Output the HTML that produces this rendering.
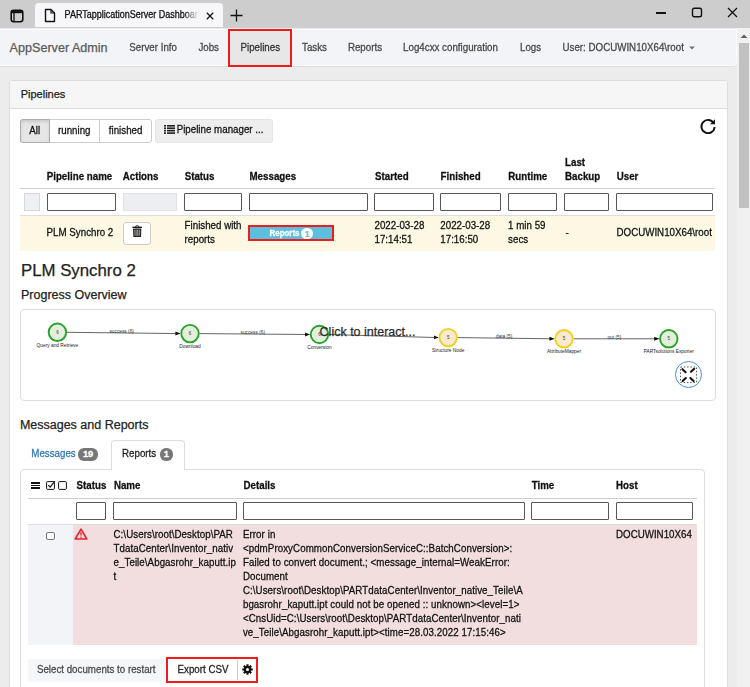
<!DOCTYPE html>
<html><head><meta charset="utf-8"><title>PARTapplicationServer Dashboard</title>
<style>
html,body{margin:0;padding:0;width:750px;height:687px;overflow:hidden;background:#ececec;}
body{position:relative;font-family:"Liberation Sans",sans-serif;}
.t{position:absolute;white-space:nowrap;line-height:1;font-family:"Liberation Sans",sans-serif;-webkit-text-stroke:0.25px currentColor;}
.r{position:absolute;}
.badge{display:flex;padding-top:1px;box-sizing:border-box;align-items:center;justify-content:center;color:#fff;font-weight:700;font-family:"Liberation Sans",sans-serif;line-height:1;}
</style></head><body>
<div class="r" style="left:0px;top:0px;width:750px;height:28px;background:#cdcdcd;"></div>
<div class="r" style="left:0px;top:27.5px;width:750px;height:1.0px;background:#bcbcbc;"></div>
<div class="r" style="left:34.5px;top:2.6px;width:188.5px;height:24.9px;background:#f7f7f9;border-radius:4px 4px 0 0;"></div>
<svg class="r" style="left:10px;top:9px" width="14" height="14" viewBox="0 0 14 14"><rect x="1.2" y="1.2" width="11.6" height="11.6" rx="2.5" fill="none" stroke="#111" stroke-width="1.6"/><rect x="1.2" y="1.2" width="11.6" height="3" fill="#111"/><line x1="4" y1="4" x2="4" y2="12" stroke="#111" stroke-width="1.3"/></svg>
<svg class="r" style="left:44px;top:8px" width="12" height="15" viewBox="0 0 12 15"><path d="M1.5 1.5 H7 L10.5 5 V13.5 H1.5 Z" fill="none" stroke="#111" stroke-width="1.4" stroke-linejoin="round"/><path d="M7 1.5 V5 H10.5" fill="none" stroke="#111" stroke-width="1.2"/></svg>
<div class="t" style="left:64.60px;top:10.68px;font-size:9px;font-weight:400;color:#111;transform:scaleY(1.12);transform-origin:0 7.62px;width:135px;overflow:hidden;white-space:nowrap;-webkit-mask-image:linear-gradient(90deg,#000 88%,transparent 99%);">PARTapplicationServer Dashboard</div>
<svg class="r" style="left:205.5px;top:12.3px" width="8" height="8" viewBox="0 0 8 8"><path d="M0.8 0.8 L7.2 7.2 M7.2 0.8 L0.8 7.2" stroke="#111" stroke-width="1.25"/></svg>
<svg class="r" style="left:230px;top:9px" width="13" height="13" viewBox="0 0 13 13"><path d="M6.5 0.5 V12.5 M0.5 6.5 H12.5" stroke="#111" stroke-width="1.3"/></svg>
<div class="r" style="left:656px;top:12px;width:10px;height:1.5px;background:#111;"></div>
<svg class="r" style="left:691px;top:7px" width="12" height="11" viewBox="0 0 12 11"><rect x="1.5" y="1.2" width="9" height="8.6" rx="1.8" fill="none" stroke="#111" stroke-width="1.4"/></svg>
<svg class="r" style="left:727px;top:7px" width="11" height="11" viewBox="0 0 11 11"><path d="M1 1 L10 10 M10 1 L1 10" stroke="#111" stroke-width="1.3"/></svg>
<div class="r" style="left:0px;top:28px;width:737.3px;height:659px;background:#ececec;"></div>
<div class="r" style="left:737.3px;top:28px;width:12.700000000000045px;height:659px;background:#f1f1f1;"></div>
<div class="r" style="left:739px;top:43px;width:10px;height:165px;background:#c1c1c1;"></div>
<svg class="r" style="left:740px;top:33px" width="8" height="6" viewBox="0 0 8 6"><path d="M0.5 5 L4 1.5 L7.5 5 Z" fill="#606060"/></svg>
<div class="r" style="left:-5px;top:28.5px;width:742px;height:38.5px;background:#dedede;border-radius:0 0 4px 0;"></div>
<div class="r" style="left:-5px;top:28.5px;width:741.5px;height:37.0px;background:#fdfdfe;border-radius:0 0 4px 0;"></div>
<div class="r" style="left:-5px;top:29.5px;width:740.7px;height:35.0px;background:#f3f4f7;border-radius:0 0 3px 0;"></div>
<div class="r" style="left:228px;top:29px;width:64px;height:37px;background:#e7e7e7;"></div>
<div class="t" style="left:9.60px;top:41.73px;font-size:12.6px;font-weight:400;color:#5a5a5a;">AppServer Admin</div>
<div class="t" style="left:129.30px;top:43.44px;font-size:9.75px;font-weight:400;color:#484848;transform:scaleY(1.12);transform-origin:0 8.26px;">Server Info</div>
<div class="t" style="left:198.40px;top:43.44px;font-size:9.75px;font-weight:400;color:#484848;transform:scaleY(1.12);transform-origin:0 8.26px;">Jobs</div>
<div class="t" style="left:240.50px;top:43.44px;font-size:9.75px;font-weight:400;color:#333;transform:scaleY(1.12);transform-origin:0 8.26px;">Pipelines</div>
<div class="t" style="left:302.00px;top:43.44px;font-size:9.75px;font-weight:400;color:#484848;transform:scaleY(1.12);transform-origin:0 8.26px;">Tasks</div>
<div class="t" style="left:347.90px;top:43.44px;font-size:9.75px;font-weight:400;color:#484848;transform:scaleY(1.12);transform-origin:0 8.26px;">Reports</div>
<div class="t" style="left:403.10px;top:43.44px;font-size:9.75px;font-weight:400;color:#484848;transform:scaleY(1.12);transform-origin:0 8.26px;">Log4cxx configuration</div>
<div class="t" style="left:520.00px;top:43.44px;font-size:9.75px;font-weight:400;color:#484848;transform:scaleY(1.12);transform-origin:0 8.26px;">Logs</div>
<div class="t" style="left:562.50px;top:43.44px;font-size:9.75px;font-weight:400;color:#484848;transform:scaleY(1.12);transform-origin:0 8.26px;">User: DOCUWIN10X64\root</div>
<svg class="r" style="left:689px;top:46px" width="6" height="4" viewBox="0 0 6 4"><path d="M0 0.5 H6 L3 3.5 Z" fill="#777"/></svg>
<div class="r" style="left:228px;top:29px;width:64px;height:38px;border:2px solid #ee1c1c;box-sizing:border-box;"></div>
<div class="r" style="left:9px;top:80px;width:719px;height:620px;background:#fff;border:1px solid #dddddd;border-radius:3px;box-sizing:border-box;"></div>
<div class="r" style="left:10px;top:81px;width:717px;height:27px;background:#f6f6f7;border-bottom:1px solid #dddddd;"></div>
<div class="t" style="left:20.70px;top:88.79px;font-size:11px;font-weight:400;color:#222;">Pipelines</div>
<div class="r" style="left:20px;top:119px;width:132px;height:24px;background:#fff;border:1px solid #cccccc;border-radius:3px;box-sizing:border-box;"></div>
<div class="r" style="left:20px;top:119px;width:30px;height:24px;background:#e6e6e6;border:1px solid #adadad;border-radius:3px 0 0 3px;box-sizing:border-box;box-shadow:inset 0 2px 3px rgba(0,0,0,.12);"></div>
<div class="r" style="left:99px;top:119px;width:1px;height:24px;background:#cccccc;"></div>
<div class="t" style="left:29.30px;top:125.84px;font-size:9.75px;font-weight:400;color:#111;transform:scaleY(1.12);transform-origin:0 8.26px;">All</div>
<div class="t" style="left:58.00px;top:125.84px;font-size:9.75px;font-weight:400;color:#111;transform:scaleY(1.12);transform-origin:0 8.26px;">running</div>
<div class="t" style="left:108.80px;top:125.84px;font-size:9.75px;font-weight:400;color:#111;transform:scaleY(1.12);transform-origin:0 8.26px;">finished</div>
<div class="r" style="left:155px;top:119px;width:118px;height:24px;background:#eeeeee;border:1px solid #e4e4e4;border-radius:3px;box-sizing:border-box;"></div>
<svg class="r" style="left:163.5px;top:125.2px" width="11" height="9" viewBox="0 0 11 10" preserveAspectRatio="none"><g fill="#222"><rect x="0" y="0" width="2" height="1.8"/><rect x="0" y="2.7" width="2" height="1.8"/><rect x="0" y="5.4" width="2" height="1.8"/><rect x="0" y="8.1" width="2" height="1.8"/><rect x="3" y="0" width="8" height="1.8"/><rect x="3" y="2.7" width="8" height="1.8"/><rect x="3" y="5.4" width="8" height="1.8"/><rect x="3" y="8.1" width="8" height="1.8"/></g></svg>
<div class="t" style="left:176.70px;top:125.44px;font-size:9.75px;font-weight:400;color:#111;transform:scaleY(1.12);transform-origin:0 8.26px;">Pipeline manager ...</div>
<svg class="r" style="left:699px;top:117px" width="18" height="18" viewBox="0 0 18 18"><path d="M14.6 6.0 A6.6 6.6 0 1 0 15.6 10" fill="none" stroke="#111" stroke-width="1.9"/><path d="M16 2.2 L16 7.2 L11 7.2 Z" fill="#111"/></svg>
<div class="t" style="left:46.70px;top:172.34px;font-size:9.75px;font-weight:700;color:#111;transform:scaleY(1.12);transform-origin:0 8.26px;">Pipeline name</div>
<div class="t" style="left:122.70px;top:172.34px;font-size:9.75px;font-weight:700;color:#111;transform:scaleY(1.12);transform-origin:0 8.26px;">Actions</div>
<div class="t" style="left:184.70px;top:172.34px;font-size:9.75px;font-weight:700;color:#111;transform:scaleY(1.12);transform-origin:0 8.26px;">Status</div>
<div class="t" style="left:249.50px;top:172.34px;font-size:9.75px;font-weight:700;color:#111;transform:scaleY(1.12);transform-origin:0 8.26px;">Messages</div>
<div class="t" style="left:375.00px;top:172.34px;font-size:9.75px;font-weight:700;color:#111;transform:scaleY(1.12);transform-origin:0 8.26px;">Started</div>
<div class="t" style="left:440.60px;top:172.34px;font-size:9.75px;font-weight:700;color:#111;transform:scaleY(1.12);transform-origin:0 8.26px;">Finished</div>
<div class="t" style="left:508.30px;top:172.34px;font-size:9.75px;font-weight:700;color:#111;transform:scaleY(1.12);transform-origin:0 8.26px;">Runtime</div>
<div class="t" style="left:616.70px;top:172.34px;font-size:9.75px;font-weight:700;color:#111;transform:scaleY(1.12);transform-origin:0 8.26px;">User</div>
<div class="t" style="left:565.00px;top:158.14px;font-size:9.75px;font-weight:700;color:#111;transform:scaleY(1.12);transform-origin:0 8.26px;">Last</div>
<div class="t" style="left:565.00px;top:172.14px;font-size:9.75px;font-weight:700;color:#111;transform:scaleY(1.12);transform-origin:0 8.26px;">Backup</div>
<div class="r" style="left:20px;top:188px;width:695px;height:1px;background:#cfcfcf;"></div>
<div class="r" style="left:24px;top:193px;width:16px;height:18px;background:#eef0f4;border:1px solid #d6d8dc;box-sizing:border-box;"></div>
<div class="r" style="left:122.5px;top:193px;width:54.5px;height:18px;background:#eceef2;border:1px solid #dfe1e5;box-sizing:border-box;"></div>
<div class="r" style="left:46.5px;top:193px;width:69.0px;height:18px;background:#fff;border:1px solid #555;border-radius:1px;box-sizing:border-box;"></div>
<div class="r" style="left:184px;top:193px;width:58px;height:18px;background:#fff;border:1px solid #555;border-radius:1px;box-sizing:border-box;"></div>
<div class="r" style="left:249px;top:193px;width:119px;height:18px;background:#fff;border:1px solid #555;border-radius:1px;box-sizing:border-box;"></div>
<div class="r" style="left:374px;top:193px;width:59.5px;height:18px;background:#fff;border:1px solid #555;border-radius:1px;box-sizing:border-box;"></div>
<div class="r" style="left:440px;top:193px;width:61px;height:18px;background:#fff;border:1px solid #555;border-radius:1px;box-sizing:border-box;"></div>
<div class="r" style="left:508px;top:193px;width:49px;height:18px;background:#fff;border:1px solid #555;border-radius:1px;box-sizing:border-box;"></div>
<div class="r" style="left:564px;top:193px;width:44.5px;height:18px;background:#fff;border:1px solid #555;border-radius:1px;box-sizing:border-box;"></div>
<div class="r" style="left:616px;top:193px;width:96.5px;height:18px;background:#fff;border:1px solid #555;border-radius:1px;box-sizing:border-box;"></div>
<div class="r" style="left:20px;top:215px;width:695px;height:1px;background:#dddddd;"></div>
<div class="r" style="left:20px;top:216px;width:695px;height:35px;background:#fcf8e3;"></div>
<div class="t" style="left:46.60px;top:228.04px;font-size:9.75px;font-weight:400;color:#111;transform:scaleY(1.12);transform-origin:0 8.26px;">PLM Synchro 2</div>
<div class="r" style="left:122.5px;top:221.5px;width:28.0px;height:23.0px;background:#fff;border:1px solid #cccccc;border-radius:3px;box-sizing:border-box;"></div>
<svg class="r" style="left:131px;top:224px" width="12" height="14" viewBox="0 0 12 14"><path d="M1.4 3.3 H11" stroke="#111" stroke-width="1.3"/><path d="M4.6 3.2 V2.2 Q6.2 1.2 7.8 2.2 V3.2" fill="none" stroke="#222" stroke-width="1"/><path d="M2.6 5.1 H9.8 L9.5 12.4 H2.9 Z" fill="#8a8a8a" stroke="#222" stroke-width="1.1" stroke-linejoin="round"/><path d="M4.9 6 V11.6 M7.5 6 V11.6" stroke="#333" stroke-width="0.7"/></svg>
<div class="t" style="left:184.60px;top:221.04px;font-size:9.75px;font-weight:400;color:#111;transform:scaleY(1.12);transform-origin:0 8.26px;">Finished with</div>
<div class="t" style="left:184.60px;top:235.04px;font-size:9.75px;font-weight:400;color:#111;transform:scaleY(1.12);transform-origin:0 8.26px;">reports</div>
<div class="r" style="left:250px;top:226.3px;width:82.5px;height:12.699999999999989px;background:#5bc0de;"></div>
<div class="t" style="left:269.60px;top:229.91px;font-size:7.9px;font-weight:700;color:#fff;transform:scaleY(1.12);transform-origin:0 6.69px;-webkit-text-stroke:0.25px #fff;">Reports</div>
<div class="r badge" style="left:301px;top:228.2px;width:12px;height:10.6px;border-radius:6px;background:#fff;color:#5bc0de;font-size:8.5px;-webkit-text-stroke:0.2px #5bc0de;">1</div>
<div class="r" style="left:248px;top:224.5px;width:86px;height:16.5px;border:2px solid #ee1c1c;box-sizing:border-box;"></div>
<div class="t" style="left:374.50px;top:221.04px;font-size:9.75px;font-weight:400;color:#111;transform:scaleY(1.12);transform-origin:0 8.26px;">2022-03-28</div>
<div class="t" style="left:374.50px;top:235.04px;font-size:9.75px;font-weight:400;color:#111;transform:scaleY(1.12);transform-origin:0 8.26px;">17:14:51</div>
<div class="t" style="left:440.30px;top:221.04px;font-size:9.75px;font-weight:400;color:#111;transform:scaleY(1.12);transform-origin:0 8.26px;">2022-03-28</div>
<div class="t" style="left:440.30px;top:235.04px;font-size:9.75px;font-weight:400;color:#111;transform:scaleY(1.12);transform-origin:0 8.26px;">17:16:50</div>
<div class="t" style="left:508.10px;top:221.04px;font-size:9.75px;font-weight:400;color:#111;transform:scaleY(1.12);transform-origin:0 8.26px;">1 min 59</div>
<div class="t" style="left:508.10px;top:235.04px;font-size:9.75px;font-weight:400;color:#111;transform:scaleY(1.12);transform-origin:0 8.26px;">secs</div>
<div class="t" style="left:565.50px;top:227.74px;font-size:9.75px;font-weight:400;color:#111;transform:scaleY(1.12);transform-origin:0 8.26px;">-</div>
<div class="t" style="left:616.50px;top:227.74px;font-size:9.75px;font-weight:400;color:#111;transform:scaleY(1.12);transform-origin:0 8.26px;">DOCUWIN10X64\root</div>
<div class="t" style="left:21.00px;top:263.08px;font-size:16.8px;font-weight:400;color:#222;">PLM Synchro 2</div>
<div class="t" style="left:21.00px;top:288.72px;font-size:12.5px;font-weight:400;color:#222;">Progress Overview</div>
<div class="r" style="left:20px;top:308.5px;width:696px;height:92.0px;background:#fff;border:1px solid #dddddd;border-radius:4px;box-sizing:border-box;"></div>
<svg class="r" style="left:0;top:0" width="750" height="687" viewBox="0 0 750 687"><defs><marker id="ah" markerWidth="6" markerHeight="6" refX="4.6" refY="3" orient="auto" markerUnits="userSpaceOnUse"><path d="M0 1 L5 3 L0 5 Z" fill="#111"/></marker></defs><line x1="66.9" y1="332.3" x2="180.0" y2="333.6" stroke="#555" stroke-width="0.9" marker-end="url(#ah)"/><text x="121.7" y="332.65000000000003" font-size="4.8" text-anchor="middle" fill="#333" font-family="Liberation Sans">success (6)</text><line x1="199.5" y1="333.6" x2="309.5" y2="334.5" stroke="#555" stroke-width="0.9" marker-end="url(#ah)"/><text x="252.75" y="333.75" font-size="4.8" text-anchor="middle" fill="#333" font-family="Liberation Sans">success (6)</text><line x1="329.0" y1="334.5" x2="438.2" y2="337.6" stroke="#555" stroke-width="0.9" marker-end="url(#ah)"/><line x1="457.7" y1="337.6" x2="554.0" y2="338.8" stroke="#555" stroke-width="0.9" marker-end="url(#ah)"/><text x="504.1" y="337.90000000000003" font-size="4.8" text-anchor="middle" fill="#333" font-family="Liberation Sans">data (5)</text><line x1="573.5" y1="338.8" x2="658.8" y2="338.8" stroke="#555" stroke-width="0.9" marker-end="url(#ah)"/><text x="614.4" y="338.5" font-size="4.8" text-anchor="middle" fill="#333" font-family="Liberation Sans">out (5)</text><circle cx="57.4" cy="332.3" r="8.75" fill="#e3efdc" stroke="#28a228" stroke-width="1.9"/><text x="57.4" y="333.90000000000003" font-size="4.5" text-anchor="middle" fill="#333" font-family="Liberation Sans">6</text><text x="57.4" y="346.8" font-size="4.8" text-anchor="middle" fill="#222" font-family="Liberation Sans">Query and Retrieve</text><circle cx="190" cy="333.6" r="8.75" fill="#e3efdc" stroke="#28a228" stroke-width="1.9"/><text x="190" y="335.20000000000005" font-size="4.5" text-anchor="middle" fill="#333" font-family="Liberation Sans">6</text><text x="190" y="348.1" font-size="4.8" text-anchor="middle" fill="#222" font-family="Liberation Sans">Download</text><circle cx="319.5" cy="334.5" r="8.75" fill="#e3efdc" stroke="#28a228" stroke-width="1.9"/><text x="319.5" y="336.1" font-size="4.5" text-anchor="middle" fill="#333" font-family="Liberation Sans">6</text><text x="319.5" y="349.0" font-size="4.8" text-anchor="middle" fill="#222" font-family="Liberation Sans">Conversion</text><circle cx="448.2" cy="337.6" r="8.75" fill="#f9e9cf" stroke="#f2cf1d" stroke-width="1.9"/><text x="448.2" y="339.20000000000005" font-size="4.5" text-anchor="middle" fill="#333" font-family="Liberation Sans">5</text><text x="448.2" y="352.1" font-size="4.8" text-anchor="middle" fill="#222" font-family="Liberation Sans">Structure Node</text><circle cx="564" cy="338.8" r="8.75" fill="#f9e9cf" stroke="#f2cf1d" stroke-width="1.9"/><text x="564" y="340.40000000000003" font-size="4.5" text-anchor="middle" fill="#333" font-family="Liberation Sans">5</text><text x="564" y="353.3" font-size="4.8" text-anchor="middle" fill="#222" font-family="Liberation Sans">AttributeMapper</text><circle cx="668.8" cy="338.8" r="8.75" fill="#e3efdc" stroke="#28a228" stroke-width="1.9"/><text x="668.8" y="340.40000000000003" font-size="4.5" text-anchor="middle" fill="#333" font-family="Liberation Sans">5</text><text x="668.8" y="353.3" font-size="4.8" text-anchor="middle" fill="#222" font-family="Liberation Sans">PARTsolutions Exporter</text><circle cx="688.5" cy="374.5" r="13" fill="#fff" stroke="#4a8fd6" stroke-width="1"/><rect x="680.5" y="367" width="16" height="15.5" fill="none" stroke="#444" stroke-width="0.9" stroke-dasharray="1.5 1.8"/><g stroke="#111" stroke-width="2.1" fill="none" stroke-linecap="round"><path d="M682.4 369.2 L685.6 372.2 M694.2 368.8 L691 371.8 M682.6 381 L685.8 378 M693.6 381 L690.4 378"/></g></svg>
<div class="t" style="left:319.60px;top:325.92px;font-size:12.5px;font-weight:400;color:#2a2a2a;">Click to interact...</div>
<div class="t" style="left:19.90px;top:418.72px;font-size:12.5px;font-weight:400;color:#222;">Messages and Reports</div>
<div class="r" style="left:20px;top:468.5px;width:685px;height:231.5px;background:#fff;border:1px solid #dddddd;border-radius:4px 4px 0 0;box-sizing:border-box;"></div>
<div class="r" style="left:110.5px;top:439.5px;width:74.5px;height:30.5px;background:#fff;border:1px solid #dddddd;border-bottom:none;border-radius:4px 4px 0 0;box-sizing:border-box;"></div>
<div class="t" style="left:31.30px;top:449.04px;font-size:9.75px;font-weight:400;color:#337ab7;transform:scaleY(1.12);transform-origin:0 8.26px;">Messages</div>
<div class="r badge" style="left:78.3px;top:447.5px;width:19.5px;height:13px;border-radius:6px;background:#777;font-size:9.3px;-webkit-text-stroke:0.3px #fff;">19</div>
<div class="t" style="left:122.00px;top:449.04px;font-size:9.75px;font-weight:400;color:#222;transform:scaleY(1.12);transform-origin:0 8.26px;">Reports</div>
<div class="r badge" style="left:159.5px;top:447.5px;width:13.5px;height:13px;border-radius:6px;background:#777;font-size:9.3px;-webkit-text-stroke:0.3px #fff;">1</div>
<div class="r" style="left:30.7px;top:482px;width:9.099999999999998px;height:1.6000000000000227px;background:#111;"></div>
<div class="r" style="left:30.7px;top:484.8px;width:9.099999999999998px;height:1.599999999999966px;background:#111;"></div>
<div class="r" style="left:30.7px;top:487.4px;width:9.099999999999998px;height:1.6000000000000227px;background:#111;"></div>
<svg class="r" style="left:46px;top:480px" width="10" height="10" viewBox="0 0 10 10"><rect x="0.6" y="1.6" width="7.8" height="7.8" rx="1" fill="none" stroke="#111" stroke-width="1"/><path d="M2.2 5.2 L4.2 7.2 L8.8 1" fill="none" stroke="#111" stroke-width="1.2"/></svg>
<svg class="r" style="left:58px;top:480px" width="10" height="10" viewBox="0 0 10 10"><rect x="0.6" y="1.6" width="7.8" height="7.8" rx="1" fill="none" stroke="#111" stroke-width="1"/></svg>
<div class="t" style="left:76.60px;top:481.24px;font-size:9.75px;font-weight:700;color:#111;transform:scaleY(1.12);transform-origin:0 8.26px;">Status</div>
<div class="t" style="left:113.90px;top:481.24px;font-size:9.75px;font-weight:700;color:#111;transform:scaleY(1.12);transform-origin:0 8.26px;">Name</div>
<div class="t" style="left:243.50px;top:481.24px;font-size:9.75px;font-weight:700;color:#111;transform:scaleY(1.12);transform-origin:0 8.26px;">Details</div>
<div class="t" style="left:531.70px;top:481.24px;font-size:9.75px;font-weight:700;color:#111;transform:scaleY(1.12);transform-origin:0 8.26px;">Time</div>
<div class="t" style="left:616.00px;top:481.24px;font-size:9.75px;font-weight:700;color:#111;transform:scaleY(1.12);transform-origin:0 8.26px;">Host</div>
<div class="r" style="left:27.5px;top:497.5px;width:669.5px;height:1.0px;background:#cfcfcf;"></div>
<div class="r" style="left:75.8px;top:502.3px;width:30.200000000000003px;height:17.69999999999999px;background:#fff;border:1px solid #555;border-radius:1px;box-sizing:border-box;"></div>
<div class="r" style="left:113px;top:502.3px;width:123.69999999999999px;height:17.69999999999999px;background:#fff;border:1px solid #555;border-radius:1px;box-sizing:border-box;"></div>
<div class="r" style="left:243px;top:502.3px;width:281.5px;height:17.69999999999999px;background:#fff;border:1px solid #555;border-radius:1px;box-sizing:border-box;"></div>
<div class="r" style="left:531px;top:502.3px;width:78.29999999999995px;height:17.69999999999999px;background:#fff;border:1px solid #555;border-radius:1px;box-sizing:border-box;"></div>
<div class="r" style="left:615.5px;top:502.3px;width:77.29999999999995px;height:17.69999999999999px;background:#fff;border:1px solid #555;border-radius:1px;box-sizing:border-box;"></div>
<div class="r" style="left:27.5px;top:524px;width:669.5px;height:1px;background:#dddddd;"></div>
<div class="r" style="left:27.5px;top:525px;width:45.2px;height:119.5px;background:#f3f4f8;"></div>
<div class="r" style="left:72.7px;top:525px;width:624.3px;height:119.5px;background:#f2dede;"></div>
<div class="r" style="left:45.7px;top:531.9px;width:9px;height:8.5px;border:1px solid #777;border-radius:2px;background:#fff;box-sizing:border-box;"></div>
<svg class="r" style="left:74px;top:528px" width="14" height="12" viewBox="0 0 14 12"><path d="M7 1.2 L12.8 11 H1.2 Z" fill="none" stroke="#e2242a" stroke-width="1.6" stroke-linejoin="round"/><path d="M7 4.2 V7.6" stroke="#e2242a" stroke-width="1.4"/><circle cx="7" cy="9.2" r="0.8" fill="#e2242a"/></svg>
<div class="t" style="left:113.50px;top:529.74px;font-size:9.75px;font-weight:400;color:#111;transform:scaleY(1.12);transform-origin:0 8.26px;letter-spacing:0.06px;">C:\Users\root\Desktop\PAR</div>
<div class="t" style="left:113.50px;top:543.74px;font-size:9.75px;font-weight:400;color:#111;transform:scaleY(1.12);transform-origin:0 8.26px;letter-spacing:0.06px;">TdataCenter\Inventor_nativ</div>
<div class="t" style="left:113.50px;top:557.74px;font-size:9.75px;font-weight:400;color:#111;transform:scaleY(1.12);transform-origin:0 8.26px;letter-spacing:0.06px;">e_Teile\Abgasrohr_kaputt.ip</div>
<div class="t" style="left:113.50px;top:571.74px;font-size:9.75px;font-weight:400;color:#111;transform:scaleY(1.12);transform-origin:0 8.26px;letter-spacing:0.06px;">t</div>
<div class="t" style="left:242.90px;top:529.74px;font-size:9.75px;font-weight:400;color:#111;transform:scaleY(1.12);transform-origin:0 8.26px;letter-spacing:0.065px;">Error in</div>
<div class="t" style="left:242.90px;top:543.74px;font-size:9.75px;font-weight:400;color:#111;transform:scaleY(1.12);transform-origin:0 8.26px;letter-spacing:0.065px;">&lt;pdmProxyCommonConversionServiceC::BatchConversion&gt;:</div>
<div class="t" style="left:242.90px;top:557.74px;font-size:9.75px;font-weight:400;color:#111;transform:scaleY(1.12);transform-origin:0 8.26px;letter-spacing:0.065px;">Failed to convert document.; &lt;message_internal=WeakError:</div>
<div class="t" style="left:242.90px;top:571.74px;font-size:9.75px;font-weight:400;color:#111;transform:scaleY(1.12);transform-origin:0 8.26px;letter-spacing:0.065px;">Document</div>
<div class="t" style="left:242.90px;top:585.74px;font-size:9.75px;font-weight:400;color:#111;transform:scaleY(1.12);transform-origin:0 8.26px;letter-spacing:0.065px;">C:\Users\root\Desktop\PARTdataCenter\Inventor_native_Teile\A</div>
<div class="t" style="left:242.90px;top:599.74px;font-size:9.75px;font-weight:400;color:#111;transform:scaleY(1.12);transform-origin:0 8.26px;letter-spacing:0.065px;">bgasrohr_kaputt.ipt could not be opened :: unknown&gt;&lt;level=1&gt;</div>
<div class="t" style="left:242.90px;top:613.74px;font-size:9.75px;font-weight:400;color:#111;transform:scaleY(1.12);transform-origin:0 8.26px;letter-spacing:0.065px;">&lt;CnsUid=C:\Users\root\Desktop\PARTdataCenter\Inventor_nati</div>
<div class="t" style="left:242.90px;top:627.74px;font-size:9.75px;font-weight:400;color:#111;transform:scaleY(1.12);transform-origin:0 8.26px;letter-spacing:0.065px;">ve_Teile\Abgasrohr_kaputt.ipt&gt;&lt;time=28.03.2022 17:15:46&gt;</div>
<div class="t" style="left:616.00px;top:530.14px;font-size:9.75px;font-weight:400;color:#111;transform:scaleY(1.12);transform-origin:0 8.26px;">DOCUWIN10X64</div>
<div class="r" style="left:27.5px;top:659px;width:137.5px;height:22.5px;background:#f5f6f9;border-radius:3px;"></div>
<div class="t" style="left:36.90px;top:664.74px;font-size:9.75px;font-weight:400;color:#4a4a4a;transform:scaleY(1.12);transform-origin:0 8.26px;">Select documents to restart</div>
<div class="r" style="left:166px;top:657px;width:91.5px;height:26px;background:#fff;"></div>
<div class="r" style="left:237px;top:660px;width:1px;height:20px;background:#cccccc;"></div>
<div class="t" style="left:177.50px;top:664.74px;font-size:9.75px;font-weight:400;color:#222;transform:scaleY(1.12);transform-origin:0 8.26px;">Export CSV</div>
<svg class="r" style="left:242px;top:664px" width="11" height="11" viewBox="0 0 11 11"><g transform="translate(5.5 5.5)"><circle r="3.6" fill="#111"/><g fill="#111"><rect x="-1.1" y="-5.2" width="2.2" height="3" transform="rotate(0)"/><rect x="-1.1" y="-5.2" width="2.2" height="3" transform="rotate(45)"/><rect x="-1.1" y="-5.2" width="2.2" height="3" transform="rotate(90)"/><rect x="-1.1" y="-5.2" width="2.2" height="3" transform="rotate(135)"/><rect x="-1.1" y="-5.2" width="2.2" height="3" transform="rotate(180)"/><rect x="-1.1" y="-5.2" width="2.2" height="3" transform="rotate(225)"/><rect x="-1.1" y="-5.2" width="2.2" height="3" transform="rotate(270)"/><rect x="-1.1" y="-5.2" width="2.2" height="3" transform="rotate(315)"/></g><circle r="1.5" fill="#fff"/></g></svg>
<div class="r" style="left:166px;top:657px;width:91.5px;height:26px;border:2px solid #ee1c1c;box-sizing:border-box;"></div>
</body></html>
